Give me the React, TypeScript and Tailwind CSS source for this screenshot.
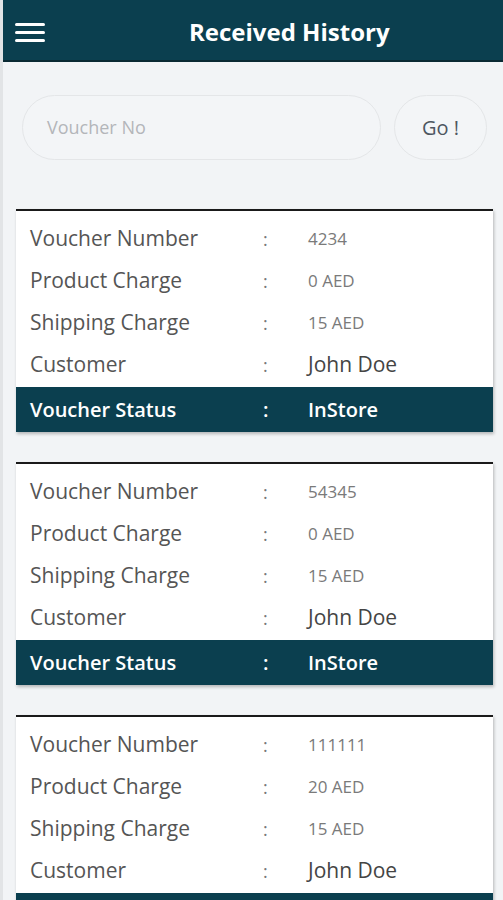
const VOUCHERS = [
  { no: "4234", product: "0 AED", shipping: "15 AED", customer: "John Doe", status: "InStore" },
  { no: "54345", product: "0 AED", shipping: "15 AED", customer: "John Doe", status: "InStore" },
  { no: "111111", product: "20 AED", shipping: "15 AED", customer: "John Doe", status: "InStore" },
];

const FONT = "font-['Open_Sans','Noto_Sans',sans-serif]";

function Row({ label, value, big }: { label: string; value: string; big?: boolean }) {
  return (
    <div className="flex h-[42px] items-center">
      <span className="w-[247px] pl-[14px] text-[21px] text-[#555]">{label}</span>
      <span className="w-[45px] text-[18px] text-[#777]">:</span>
      <span className={big ? "text-[21px] text-[#444]" : "text-[17px] text-[#7a7a7a]"}>{value}</span>
    </div>
  );
}

function VoucherCard({ v }: { v: (typeof VOUCHERS)[number] }) {
  return (
    <div className="border-t-2 border-[#1a1a1a] bg-white pt-[7px] shadow-[1px_2px_3px_rgba(0,0,0,0.25)]">
      <Row label="Voucher Number" value={v.no} />
      <Row label="Product Charge" value={v.product} />
      <Row label="Shipping Charge" value={v.shipping} />
      <Row label="Customer" value={v.customer} big />
      <div className="mt-px flex h-[45px] items-center bg-[#0b3f4f] text-[20px] font-semibold text-white">
        <span className="w-[247px] pl-[14px]">Voucher Status</span>
        <span className="w-[45px]">:</span>
        <span>{v.status}</span>
      </div>
    </div>
  );
}

export default function App() {
  return (
    <div className={`h-[900px] overflow-hidden border-l-[3px] border-[#e2e4e6] bg-[#f2f4f6] ${FONT}`}>
      <header className="-ml-[3px] flex h-[62px] items-center border-b-2 border-l-[3px] border-[#0a2a33] bg-[#0b3f4f] pl-[12px] pt-[4px]">
        <div className="flex w-[30px] flex-col gap-[5px]">
          <span className="h-[3px] rounded-sm bg-white" />
          <span className="h-[3px] rounded-sm bg-white" />
          <span className="h-[3px] rounded-sm bg-white" />
        </div>
        <h1 className="ml-[144px] text-[24px] font-bold text-white">Received History</h1>
      </header>

      <div className="flex gap-[13px] pl-[19px] pr-[16px] pt-[33px]">
        <div className="flex h-[65px] w-[359px] items-center rounded-full border border-[#e4e6e8] bg-[#f3f5f7] pl-[24px] text-[18px] text-[#b3b6ba]">
          Voucher No
        </div>
        <div className="flex h-[65px] w-[93px] items-center justify-center rounded-full border border-[#e4e6e8] bg-[#f3f5f7] text-[20px] text-[#4d5660]">
          Go !
        </div>
      </div>

      <div className="flex flex-col gap-[30px] pl-[13px] pr-[10px] pt-[49px]">
        {VOUCHERS.map((v) => (
          <VoucherCard key={v.no} v={v} />
        ))}
      </div>
    </div>
  );
}
